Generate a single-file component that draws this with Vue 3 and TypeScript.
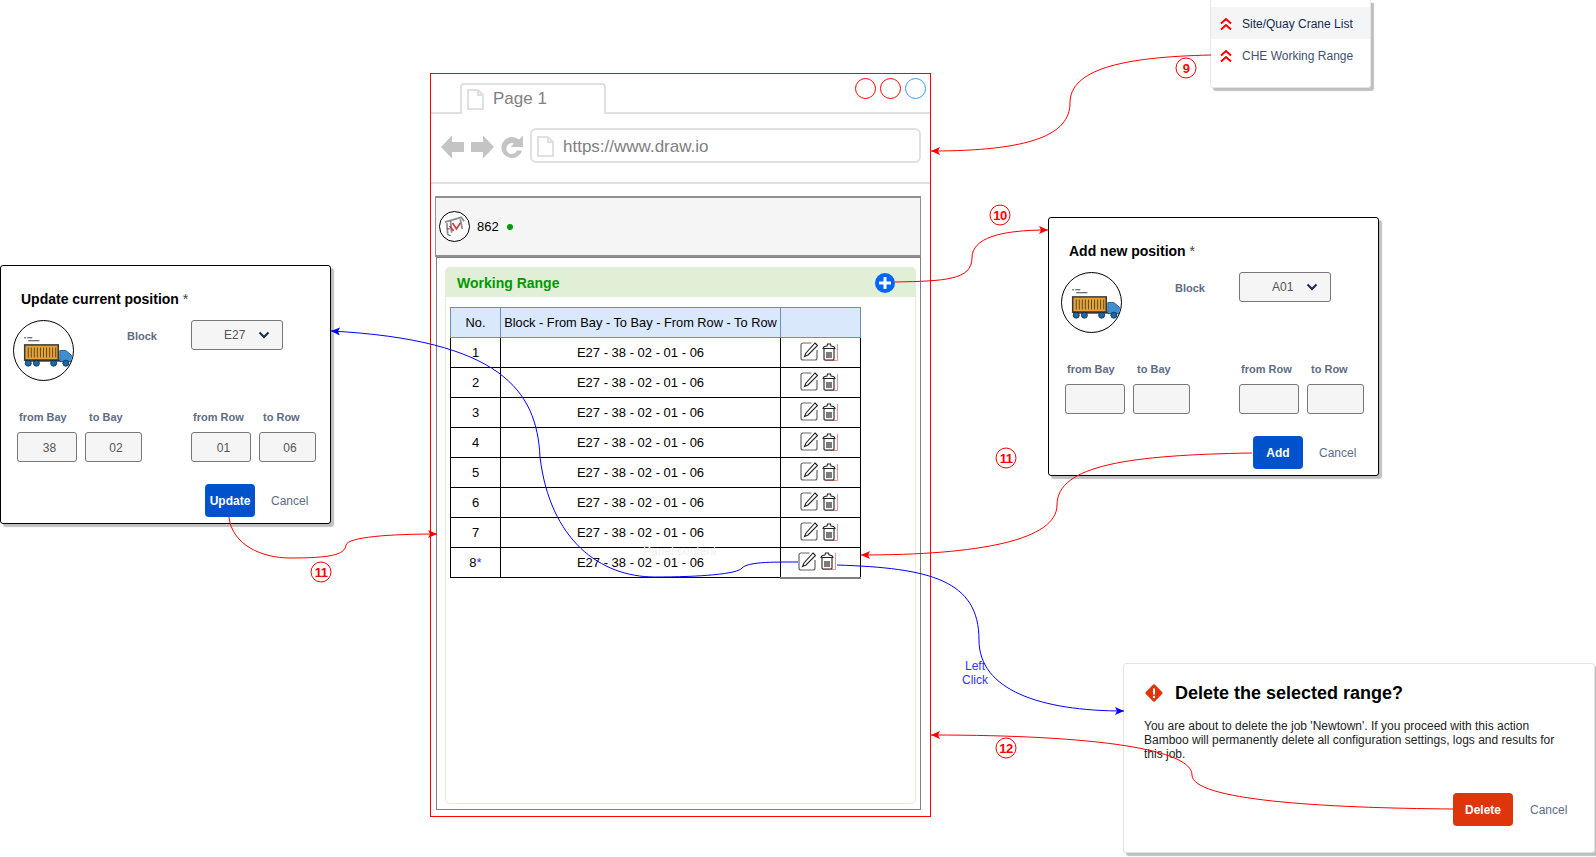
<script setup lang="ts">
interface Dialog {
  id: string
  title: string
  block: string
  action: string
  values: string[]
}
interface Badge {
  n: string
  x: number
  y: number
}

const rows: number[] = [1, 2, 3, 4, 5, 6, 7, 8]
const fields: string[] = ['from Bay', 'to Bay', 'from Row', 'to Row']
const dialogs: Dialog[] = [
  { id: 'update', title: 'Update current position', block: 'E27', action: 'Update', values: ['38', '02', '01', '06'] },
  { id: 'add', title: 'Add new position', block: 'A01', action: 'Add', values: ['', '', '', ''] },
]
const badges: Badge[] = [
  { n: '9', x: 1186, y: 68 },
  { n: '10', x: 1000, y: 215 },
  { n: '11', x: 1006, y: 458 },
  { n: '11', x: 321, y: 572 },
  { n: '12', x: 1006, y: 748 },
]
const redLinks: string[] = [
  'M1211 55 C1120 57 1070 70 1070 103 C1070 135 1030 151 931 151',
  'M895 282 C945 281 972 280 972 258 C972 238 1000 230 1048 230',
  'M1252 453 C1130 455 1057 465 1057 505 C1057 540 980 555 861 555',
  'M229 517 C232 545 262 558 290 558 C330 558 345 555 346 545 C348 537 390 534 437 534',
  'M1454 809 C1320 808 1192 800 1192 775 C1192 750 1100 735 931 735',
]
const blueLinks: string[] = [
  'M798 562 C770 562 748 562 742 568 C738 574 700 577 655 577 C600 577 550 540 540 457 C537 390 500 340 331 331',
  'M837 565 C930 568 979 580 979 640 C979 690 1040 711 1124 711',
]
</script>

<template>
  <div class="canvas">
    <!-- Browser mock-up -->
    <section class="browser">
      <header class="tabbar">
        <div class="tab">
          <svg class="file" viewBox="0 0 17 21"><path d="M1 1h10l5 5v14H1z" /><path d="M11 1v5h5" /></svg>
          <span>Page 1</span>
        </div>
        <div class="winbtns">
          <i class="winbtn"></i>
          <i class="winbtn"></i>
          <i class="winbtn blue"></i>
        </div>
      </header>
      <div class="urlrow">
        <svg class="nav" viewBox="0 0 84 26">
          <path d="M0 13 11 1.500V8H23V18H11V24.500Z" />
          <path d="M53 13 42 1.500V8H30V18H42V24.500Z" />
          <path d="M71 3a10.500 10.500 0 1 0 10 13.500h-5a5.500 5.500 0 1 1-3-7l-3.500 3.500H82V1.500l-4 4a10.500 10.500 0 0 0-7-2.500Z" />
        </svg>
        <div class="address">
          <svg class="file" viewBox="0 0 17 21"><path d="M1 1h10l5 5v14H1z" /><path d="M11 1v5h5" /></svg>
          <span>https://www.draw.io</span>
        </div>
      </div>
      <div class="page">
        <div class="topbar">
          <div class="crane">
            <svg viewBox="0 0 30 30" width="30" height="30">
              <path d="M5 11 L22 6 L25 10 M7 12 L8 24 M11 10 L12 22 M21 8 L23 18" fill="none" stroke="#8a8f94" stroke-width="1.800" />
              <path d="M13 12 L17 18 L21 12 M10 15 L14 20" fill="none" stroke="#c8413b" stroke-width="1.800" />
              <path d="M8 24 L11 25 M7 18 L10 18" stroke="#666" stroke-width="1.200" />
            </svg>
          </div>
          <span class="unit">862</span>
          <i class="online"></i>
        </div>
        <div class="content">
          <div class="panel">
            <div class="panel-head">
              <span>Working Range</span>
              <svg class="plus" viewBox="0 0 20 20">
                <circle cx="10" cy="10" r="10" fill="#0065ff" />
                <path d="M10 4V16M4 10H16" stroke="#fff" stroke-width="3" />
              </svg>
            </div>
            <div class="table-wrap">
              <table class="grid">
                <thead>
                  <tr>
                    <th class="c-no">No.</th>
                    <th class="c-main">Block - From Bay - To Bay - From Row - To Row</th>
                    <th class="c-act"></th>
                  </tr>
                </thead>
                <tbody>
                  <tr v-for="r in rows" :key="r" :class="{ last: r === 8 }">
                    <td>{{ r }}<span v-if="r === 8" class="star">*</span></td>
                    <td>E27 - 38 - 02 - 01 - 06</td>
                    <td>
                      <div class="tools">
                        <svg class="edit" viewBox="0 0 18 19">
                          <path d="M11.500 1H3a2 2 0 0 0-2 2v13a2 2 0 0 0 2 2h12a2 2 0 0 0 2-2V8" fill="none" stroke="#666" stroke-width="1.200" />
                          <path d="M15 1 17.500 3.500 8 13 4.500 14.500 6 11Z" fill="#fff" stroke="#222" stroke-width="1.100" />
                        </svg>
                        <svg class="trash" viewBox="0 0 16 18">
                          <path d="M15.500 1V17.500H3" fill="none" stroke="#f08c8c" stroke-width="1" />
                          <path d="M1 5.500Q1.500 3 5 3L5.500 1H8.500L9 3Q12.500 3 13 5.500ZM2 6V16Q2 17 3 17H11Q12 17 12 16V6" fill="none" stroke="#222" stroke-width="1.100" />
                          <path d="M5 9V15M7 9V15M9 9V15" stroke="#222" stroke-width="1.200" />
                        </svg>
                      </div>
                    </td>
                  </tr>
                </tbody>
              </table>
              <span class="ghost">Panel content</span>
            </div>
          </div>
        </div>
      </div>
    </section>

    <!-- Side menu -->
    <nav class="menu">
      <a class="menu-item active">
        <svg class="chev" viewBox="0 0 12 14"><path d="M1 6.500 6 2l5 4.500M1 12.500 6 8l5 4.500" /></svg>
        Site/Quay Crane List
      </a>
      <a class="menu-item">
        <svg class="chev" viewBox="0 0 12 14"><path d="M1 6.500 6 2l5 4.500M1 12.500 6 8l5 4.500" /></svg>
        CHE Working Range
      </a>
    </nav>

    <!-- Update / Add dialogs -->
    <section v-for="d in dialogs" :key="d.id" class="dialog" :class="'dialog-' + d.id">
      <h3 class="dlg-title">{{ d.title }} <em>*</em></h3>
      <div class="dlg-top">
        <div class="avatar">
          <svg viewBox="0 0 60 60" width="61" height="61">
            <path d="M11 17.500h2M14 17.500h5M15 20.500h11" stroke="#444" stroke-width="1" />
            <rect x="11.500" y="24.500" width="33" height="15" fill="#e5a23b" stroke="#3a3a3a" stroke-width="1.500" />
            <path d="M15 27V37M18 27V37M21 27V37M24 27V37M27 27V37M30 27V37M33 27V37M36 27V37M39 27V37M42 27V37" stroke="#6b4a18" stroke-width="1" />
            <rect x="12" y="39" width="46" height="2" fill="#333" />
            <path d="M46 30H52L59 36V41H46Z" fill="#3f8fcf" stroke="#1f4f7a" stroke-width="0.800" />
            <circle cx="15" cy="42.500" r="3" fill="#1a6aa8" stroke="#123" stroke-width="0.700" />
            <circle cx="23" cy="42.500" r="3" fill="#1a6aa8" stroke="#123" stroke-width="0.700" />
            <circle cx="40" cy="42.500" r="3" fill="#1a6aa8" stroke="#123" stroke-width="0.700" />
            <circle cx="52" cy="42.500" r="3" fill="#1a6aa8" stroke="#123" stroke-width="0.700" />
          </svg>
        </div>
        <span class="block-label">Block</span>
        <div class="select">
          <span>{{ d.block }}</span>
          <svg class="caret" viewBox="0 0 12 8"><path d="M1.500 1.500 6 6l4.500-4.500" /></svg>
        </div>
      </div>
      <div class="fields">
        <div class="group">
          <label class="field wide"><span>{{ fields[0] }}</span><div class="input">{{ d.values[0] }}</div></label>
          <label class="field"><span>{{ fields[1] }}</span><div class="input">{{ d.values[1] }}</div></label>
        </div>
        <div class="group">
          <label class="field wide"><span>{{ fields[2] }}</span><div class="input">{{ d.values[2] }}</div></label>
          <label class="field"><span>{{ fields[3] }}</span><div class="input">{{ d.values[3] }}</div></label>
        </div>
      </div>
      <footer class="dlg-foot">
        <button class="btn">{{ d.action }}</button>
        <span class="cancel">Cancel</span>
      </footer>
    </section>

    <!-- Delete dialog -->
    <section class="confirm">
      <div class="confirm-head">
        <svg class="warn" viewBox="0 0 20 20">
          <rect x="3.500" y="3.500" width="13" height="13" rx="1.500" transform="rotate(45 10 10)" fill="#de350b" />
          <path d="M10 5.500V11.500" stroke="#fff" stroke-width="2" />
          <circle cx="10" cy="14" r="1.200" fill="#fff" />
        </svg>
        <h2>Delete the selected range?</h2>
      </div>
      <p>You are about to delete the job 'Newtown'. If you proceed with this action Bamboo will permanently delete all configuration settings, logs and results for this job.</p>
      <footer class="confirm-foot">
        <button class="btn danger">Delete</button>
        <span class="cancel">Cancel</span>
      </footer>
    </section>

    <!-- Connectors -->
    <svg class="links" viewBox="0 0 1596 857" width="1596" height="857">
      <defs>
        <marker id="arrow-red" markerWidth="10" markerHeight="10" refX="9" refY="4" orient="auto" markerUnits="userSpaceOnUse">
          <path d="M0 0 9 4 0 8 2 4Z" fill="#ff0000" />
        </marker>
        <marker id="arrow-blue" markerWidth="10" markerHeight="10" refX="9" refY="4" orient="auto" markerUnits="userSpaceOnUse">
          <path d="M0 0 9 4 0 8 2 4Z" fill="#0000ff" />
        </marker>
      </defs>
      <path v-for="(p, i) in redLinks" :key="'r' + i" :d="p" class="link red" marker-end="url(#arrow-red)" />
      <path v-for="(p, i) in blueLinks" :key="'b' + i" :d="p" class="link blue" marker-end="url(#arrow-blue)" />
      <g v-for="(b, i) in badges" :key="'n' + i">
        <circle :cx="b.x" :cy="b.y" r="10" class="badge" />
        <text :x="b.x" :y="b.y + 5" class="badge-text">{{ b.n }}</text>
      </g>
      <text class="click" x="975" y="670">Left</text>
      <text class="click" x="975" y="684">Click</text>
    </svg>
  </div>
</template>

<style scoped>
.canvas {
  position: relative;
  width: 1596px;
  height: 857px;
  overflow: hidden;
  background: #fff;
  font-family: "Liberation Sans", Arial, sans-serif;
  font-size: 12px;
  color: #000;
}
.links {
  position: absolute;
  left: 0;
  top: 0;
  pointer-events: none;
}
.link {
  fill: none;
  stroke-width: 1;
}
.link.red { stroke: #ff0000; }
.link.blue { stroke: #0000ff; }
.badge {
  fill: #fff;
  stroke: #ff0000;
  stroke-width: 1;
}
.badge-text {
  fill: #ff0000;
  font-size: 13px;
  font-weight: 700;
  letter-spacing: -0.5px;
  text-anchor: middle;
}
.click {
  fill: #3333ff;
  font-size: 12px;
  text-anchor: middle;
}

/* browser */
.browser {
  position: absolute;
  left: 430px;
  top: 73px;
  width: 501px;
  height: 744px;
  box-sizing: border-box;
  border: 1px solid #ff0000;
  display: flex;
  flex-direction: column;
}
.tabbar {
  height: 40px;
  box-sizing: border-box;
  border-bottom: 2px solid #e0e0e0;
  display: flex;
  padding-left: 29px;
}
.tab {
  width: 146px;
  height: 31px;
  margin-top: 9px;
  padding-bottom: 1px;
  box-sizing: border-box;
  border: 2px solid #e0e0e0;
  border-bottom: 0;
  border-radius: 4px 4px 0 0;
  background: #fff;
  display: flex;
  align-items: center;
  gap: 9px;
  padding-left: 5px;
  font-size: 17px;
  color: #808080;
}
.file {
  width: 17px;
  height: 21px;
  flex: none;
  fill: none;
  stroke: #e0e0e0;
  stroke-width: 2;
}
.winbtns {
  display: flex;
  gap: 4px;
  margin-left: auto;
  margin-top: 4px;
  margin-right: 4px;
}
.winbtn {
  width: 21px;
  height: 21px;
  box-sizing: border-box;
  border: 1px solid #ff0000;
  border-radius: 50%;
}
.winbtn.blue { border-color: #3399ff; }
.urlrow {
  height: 70px;
  box-sizing: border-box;
  border-bottom: 2px solid #e0e0e0;
  display: flex;
  align-items: flex-start;
  padding: 14px 9px 0 10px;
}
.nav {
  width: 84px;
  height: 26px;
  margin-top: 6px;
  fill: #c4c4c4;
  flex: none;
}
.address {
  flex: 1;
  margin-left: 5px;
  height: 35px;
  box-sizing: border-box;
  border: 2px solid #e0e0e0;
  border-radius: 6px;
  display: flex;
  align-items: center;
  gap: 9px;
  padding: 2px 0 0 5px;
  font-size: 17px;
  color: #808080;
}
.page {
  flex: 1;
  display: flex;
  flex-direction: column;
  padding: 12px 9px 6px 4px;
}
.topbar {
  height: 61px;
  box-sizing: border-box;
  background: #f5f5f5;
  border: 1px solid #909090;
  border-bottom-width: 2px;
  border-top-width: 2px;
  display: flex;
  align-items: center;
  padding: 0 0 1px 3px;
}
.crane {
  width: 31px;
  height: 31px;
  box-sizing: border-box;
  border: 1px solid #000;
  border-radius: 50%;
  background: #fff;
  overflow: hidden;
  display: flex;
  align-items: center;
  justify-content: center;
}
.unit {
  margin-left: 7px;
  font-size: 13px;
  color: #000;
}
.online {
  width: 6px;
  height: 6px;
  margin-left: 8px;
  margin-top: 2px;
  border-radius: 50%;
  background: #009900;
}
.content {
  flex: 1;
  margin-left: 1px;
  box-sizing: border-box;
  border: 1px solid #808080;
  padding: 9px 4px 5px 8px;
  display: flex;
}
.panel {
  flex: 1;
  box-sizing: border-box;
  border: 1px solid #e1efd7;
  border-radius: 5px;
}
.panel-head {
  height: 30px;
  box-sizing: border-box;
  margin: -1px -1px 0;
  padding: 2px 21px 0 12px;
  background: #e1efd7;
  border-radius: 5px 5px 0 0;
  display: flex;
  align-items: center;
  justify-content: space-between;
  font-size: 14px;
  font-weight: 700;
  color: #009900;
}
.plus {
  width: 20px;
  height: 20px;
}
.table-wrap {
  position: relative;
  margin: 10px 0 0 4px;
  width: 411px;
}
.grid {
  border-collapse: collapse;
  table-layout: fixed;
  width: 410px;
  font-size: 13px;
}
.grid th,
.grid td {
  height: 30px;
  padding: 0;
  box-sizing: border-box;
  border: 1px solid #000;
  text-align: center;
  font-weight: 400;
}
.grid th {
  background: #dae8fc;
  border-color: #6c8ebf;
  font-size: 12.800px;
  white-space: nowrap;
}
.grid th.c-act { box-shadow: 0 -1px 0 #6c8ebf; }
.c-no { width: 50px; }
.c-main { width: 280px; }
.c-act { width: 80px; }
.star { color: #3333ff; }
.last td:last-child { border-bottom-color: #808080; border-bottom-width: 2px; }
.tools {
  display: flex;
  align-items: center;
  justify-content: center;
  gap: 4px;
  margin: -2px 0 0 -3px;
}
.last .tools { margin: -2px 0 0 -7px; }
.edit { width: 18px; height: 19px; }
.trash { width: 16px; height: 18px; }
.ghost {
  position: absolute;
  left: 193px;
  top: 237px;
  color: #f0f0f0;
  font-size: 12px;
}

/* menu */
.menu {
  position: absolute;
  left: 1210px;
  top: 0;
  width: 161px;
  height: 88px;
  box-sizing: border-box;
  padding-top: 7px;
  background: #fff;
  border: 1px solid #e6e6e6;
  border-top: 0;
  border-radius: 0 0 3px 3px;
  box-shadow: 3px 3px 1px rgba(0, 0, 0, 0.25);
}
.menu-item {
  height: 32px;
  box-sizing: border-box;
  padding: 2px 0 0 9px;
  display: flex;
  align-items: center;
  gap: 10px;
  color: #42526e;
}
.menu-item.active {
  background: #f4f5f7;
  color: #172b4d;
}
.chev {
  width: 12px;
  height: 14px;
  fill: none;
  stroke: #ff0000;
  stroke-width: 2;
}

/* dialogs */
.dialog {
  position: absolute;
  width: 331px;
  height: 259px;
  box-sizing: border-box;
  border: 1px solid #000;
  border-radius: 3px;
  background: #fff;
  box-shadow: 3px 3px 1px rgba(0, 0, 0, 0.25);
  padding: 24px 0 0 12px;
}
.dialog-update { left: 0; top: 265px; }
.dialog-add { left: 1048px; top: 217px; }
.dlg-title {
  margin: 0 0 0 8px;
  font-size: 14px;
  line-height: 18px;
  font-weight: 700;
}
.dlg-title em {
  font-style: normal;
  font-weight: 400;
  color: #444;
}
.dlg-top {
  display: flex;
  margin-top: 12px;
  height: 60px;
}
.avatar {
  width: 61px;
  height: 61px;
  box-sizing: border-box;
  border: 1px solid #000;
  border-radius: 50%;
  overflow: hidden;
  flex: none;
}
.avatar svg { margin: -1px; display: block; }
.block-label {
  width: 64px;
  margin-left: 53px;
  padding-top: 9px;
  line-height: 14px;
  font-size: 11px;
  font-weight: 700;
  color: #5e6c84;
}
.select {
  width: 92px;
  height: 30px;
  box-sizing: border-box;
  border: 1px solid #777;
  border-radius: 3px;
  background: #f5f5f5;
  display: flex;
  align-items: center;
  padding-left: 32px;
  color: #555;
}
.caret {
  width: 12px;
  height: 8px;
  margin-left: 13px;
  fill: none;
  stroke: #172b4d;
  stroke-width: 2;
}
.fields {
  display: flex;
  gap: 49px;
  margin: 30px 0 0 4px;
}
.group {
  display: flex;
  gap: 8px;
}
.field {
  display: flex;
  flex-direction: column;
  width: 57px;
  font-size: 11px;
  font-weight: 700;
  color: #5e6c84;
}
.field > span {
  line-height: 14px;
  padding-left: 4px;
  white-space: nowrap;
}
.field.wide { width: 60px; }
.field.wide > span { padding-left: 2px; }
.input {
  height: 30px;
  margin-top: 8px;
  box-sizing: border-box;
  border: 1px solid #777;
  border-radius: 3px;
  background: #f5f5f5;
  font-size: 12px;
  font-weight: 400;
  color: #555;
  line-height: 30px;
  text-align: center;
  padding-left: 5px;
}
.dlg-foot {
  display: flex;
  align-items: center;
  gap: 16px;
  margin: 22px 0 0 192px;
}
.btn {
  width: 50px;
  height: 33px;
  padding: 0;
  border: 0;
  border-radius: 4px;
  background: #0052cc;
  color: #fff;
  font: 700 12px "Liberation Sans", Arial, sans-serif;
}
.btn.danger {
  width: 60px;
  background: #de350b;
}
.cancel {
  color: #5e6c84;
  font-size: 12px;
}
.confirm {
  position: absolute;
  left: 1123px;
  top: 663px;
  width: 472px;
  height: 190px;
  box-sizing: border-box;
  border: 1px solid #e3e3e3;
  border-radius: 3px;
  background: #fff;
  box-shadow: 3px 3px 1px rgba(0, 0, 0, 0.25);
  padding: 19px 0 0 20px;
}
.confirm-head {
  display: flex;
  align-items: center;
  gap: 11px;
}
.warn {
  width: 20px;
  height: 20px;
  flex: none;
}
.confirm-head h2 {
  margin: 0;
  font-size: 18px;
  line-height: 20px;
  font-weight: 700;
}
.confirm p {
  margin: 16px 0 0;
  width: 415px;
  font-size: 12px;
  line-height: 14px;
  color: #222;
}
.confirm-foot {
  display: flex;
  align-items: center;
  gap: 17px;
  margin: 32px 0 0 309px;
}
</style>

<style>
html,
body {
  margin: 0;
  background: #fff;
}
</style>
